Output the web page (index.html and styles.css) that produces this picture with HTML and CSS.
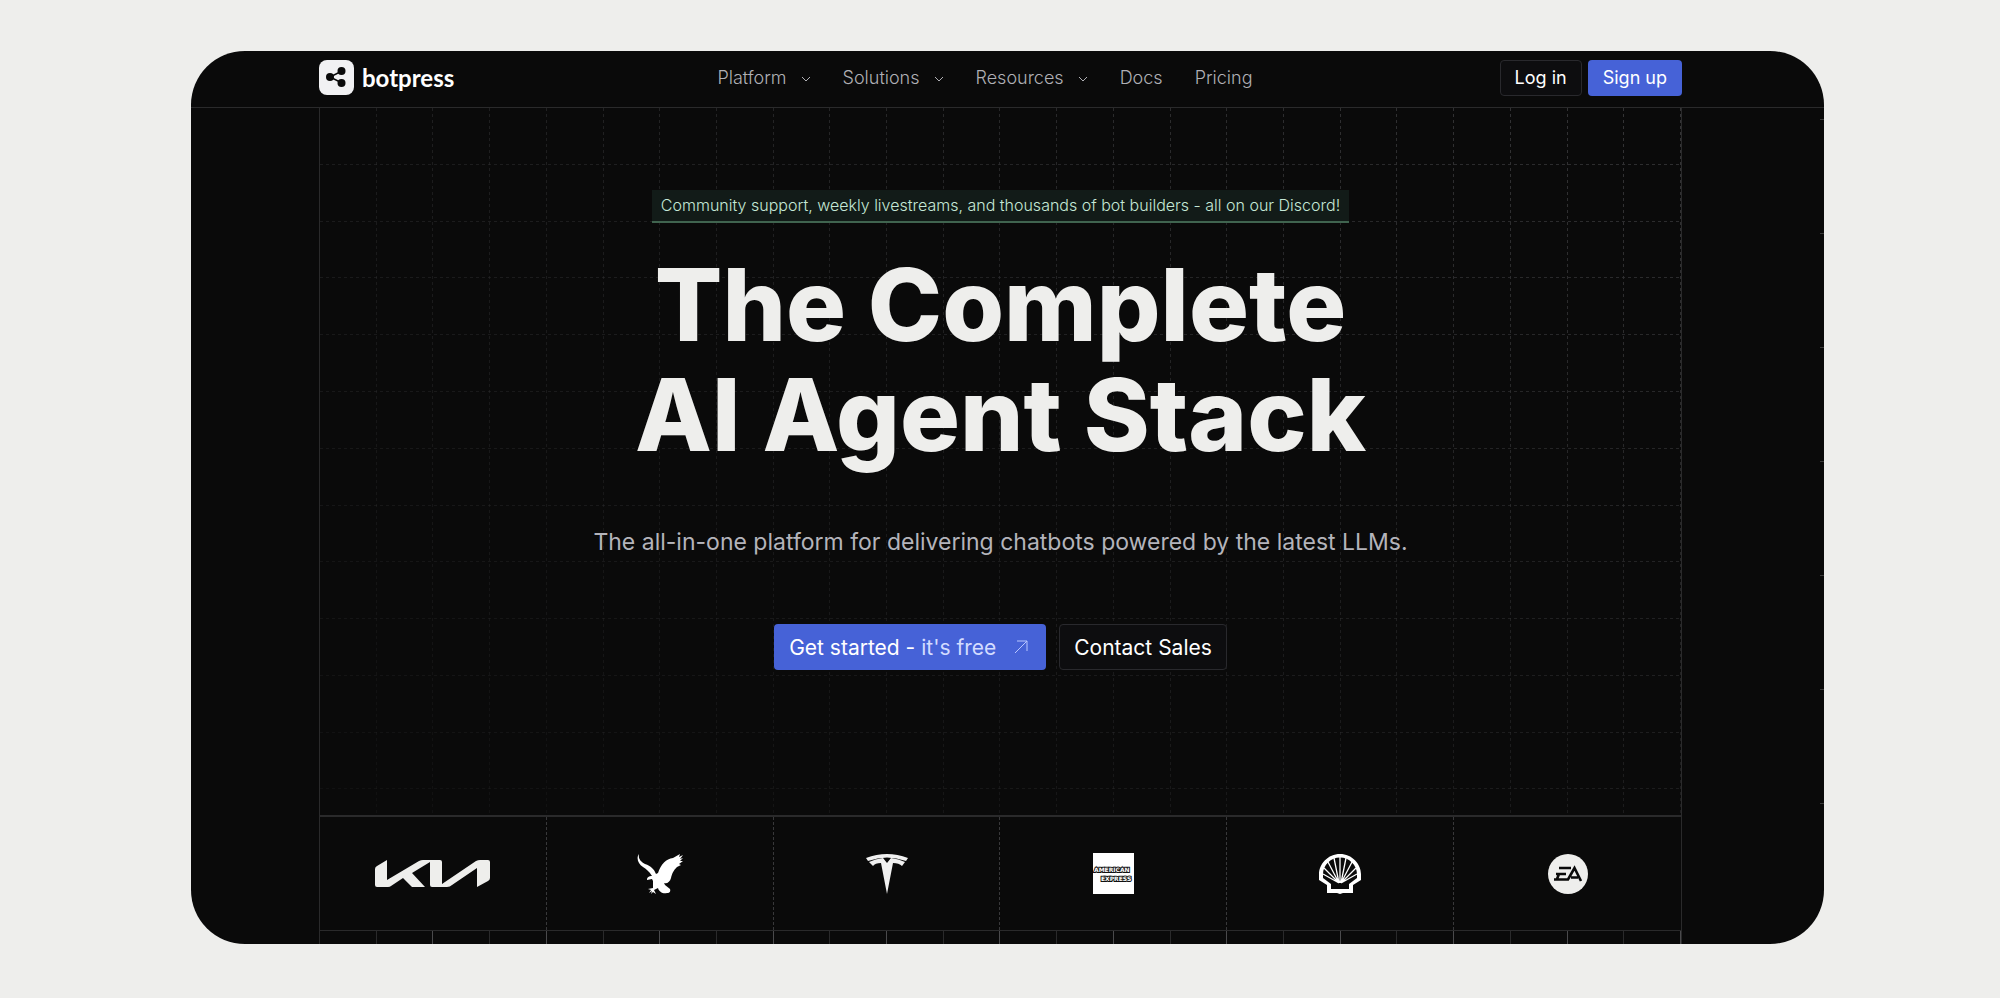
FILE: index.html
```
<!DOCTYPE html>
<html lang="en">

<head>
    <meta charset="utf-8">
    <meta name="viewport" content="width=device-width, initial-scale=1.0">
    <title>Botpress</title>
    <link rel="stylesheet" href="styles.css">
</head>

<body>
    <div class="frame">
        <header class="header">
            <div class="wrap header-inner">
                <a class="brand" href="#">
                    <svg class="brand-icon" viewBox="0 0 35 35" aria-hidden="true">
                        <rect width="35" height="35" rx="8" fill="#f1f1f3" />
                        <path d="M23 11 11 17l12 6" fill="none" stroke="#0a0a0a" stroke-width="1.5" />
                        <circle cx="22.5" cy="11" r="4" fill="#0a0a0a" />
                        <circle cx="11" cy="17" r="4" fill="#0a0a0a" />
                        <circle cx="22.5" cy="23" r="4" fill="#0a0a0a" />
                    </svg>
                    <span>botpress</span>
                </a>
                <nav class="nav">
                    <a href="#">Platform <svg class="chev" viewBox="0 0 10 6"><path d="M1 1l4 4 4-4" /></svg></a>
                    <a href="#">Solutions <svg class="chev" viewBox="0 0 10 6"><path d="M1 1l4 4 4-4" /></svg></a>
                    <a href="#">Resources <svg class="chev" viewBox="0 0 10 6"><path d="M1 1l4 4 4-4" /></svg></a>
                    <a href="#">Docs</a>
                    <a href="#">Pricing</a>
                </nav>
                <div class="account">
                    <button class="btn btn-dark" type="button">Log in</button>
                    <button class="btn btn-blue" type="button">Sign up</button>
                </div>
            </div>
        </header>

        <main class="wrap content">
            <section class="hero">
                <a class="notice" href="#">Community support, weekly livestreams, and thousands of bot builders - all on our Discord!</a>
                <h1>The Complete<br>AI Agent Stack</h1>
                <p>The all-in-one platform for delivering chatbots powered by the latest LLMs.</p>
                <div class="actions">
                    <button class="btn btn-large btn-blue" type="button">
                        <span>Get started - <span class="soft">it's free</span></span>
                        <svg class="arrow" viewBox="0 0 14 14"><path d="M1 13 13 1M3 1h10v10" /></svg>
                    </button>
                    <button class="btn btn-large btn-dark" type="button">Contact Sales</button>
                </div>
            </section>

            <section class="logos">
                <div class="logo">
                    <svg width="115" height="27" viewBox="0 0 115 27" fill="#eeeeec" role="img" aria-label="Kia">
                        <path d="M0 9Q0 7 2 6L12 0V20L44 1Q46 0 48 0H65Q67 0 67 2V24L101 1Q103 0 105 0H113Q115 0 115 2V18Q115 20 113 21L102 27V8L77 25Q75 27 72 27H57Q55 27 55 25V2L37 13 50 27H37L28 18 16 26Q15 27 13 27H2Q0 27 0 25Z" />
                    </svg>
                </div>
                <div class="logo">
                    <svg width="46" height="40" viewBox="0 0 46 40" fill="#fff" role="img" aria-label="American Eagle">
                        <path d="M2 0C1 5 4 8 8 10C14 12 17 15 19 20L21 19C24 10 29 5 36 4L43 0 42 3 46 1 43 5 46 4 43 7 46 7 42 10 44 11 40 13C36 17 35 20 34 24C33 28 30 30 27 29L28 31 33 35C34 38 32 39 30 39C26 40 22 38 21 34L17 36 19 40 16 38 14 40 15 37 12 39 14 36 11 35 16 34 16 27 15 25 10 26C10 23 12 22 15 22C12 17 9 15 6 13C1 10-1 4 2 0Z" />
                    </svg>
                </div>
                <div class="logo">
                    <svg width="42" height="40" viewBox="0 0 42 40" fill="#f1f1f1" role="img" aria-label="Tesla">
                        <path d="M0 4Q21-4 42 4L40 7Q21 0 2 7Z" />
                        <path d="M3 8Q9 5 17 4L21 9 25 4Q33 5 39 8L36 12Q33 9 27 9L21 40 15 9Q9 9 7 12Z" />
                    </svg>
                </div>
                <div class="logo">
                    <svg class="amex" width="41" height="41" viewBox="0 0 41 41" role="img" aria-label="American Express">
                        <rect width="41" height="41" fill="#fff" />
                        <text x="1" y="19">AMERICAN</text>
                        <text x="8" y="28">EXPRESS</text>
                    </svg>
                </div>
                <div class="logo">
                    <svg width="42" height="40" viewBox="0 0 42 40" role="img" aria-label="Shell">
                        <path d="M21 0C9 0 0 10 0 20V26L8 31V39H18L21 40 24 39H34V31L42 26V20C42 10 33 0 21 0Z" fill="#fff" />
                        <path d="M21 3.5C12 3.5 4 11 4 20V24L12 30V35H30V30L38 24V20C38 11 30 3.5 21 3.5Z" fill="#0a0a0a" />
                        <path d="M20 29 4 20M20 29 5 14M20 29 9 8M20 29 15 4M21 29V3M22 29 27 4M22 29 33 8M22 29 37 14M22 29 38 20" stroke="#fff" stroke-width="1.3" />
                    </svg>
                </div>
                <div class="logo">
                    <svg width="40" height="40" viewBox="0 0 40 40" role="img" aria-label="EA">
                        <circle cx="20" cy="20" r="20" fill="#eeeeec" />
                        <path d="M11 14H23M8 20H18M6 25.5H20L26.5 14 33 27M23 23.5H30M11 20 9 25" fill="none" stroke="#0a0a0a" stroke-width="2.6" />
                    </svg>
                </div>
            </section>
            <div class="ruler"></div>
        </main>
    </div>
</body>

</html>
```
FILE: styles.css
```
* {
    box-sizing: border-box;
}

html,
body {
    height: 100%;
}

body {
    margin: 0;
    padding: 51px 176px 54px 191px;
    background: #eeeeec;
    color: #fff;
    font-family: Inter, "Open Sans", sans-serif;
}

a {
    color: inherit;
    text-decoration: none;
}

.frame {
    position: relative;
    display: flex;
    flex-direction: column;
    min-height: 100%;
    padding-right: 14px;
    overflow: hidden;
    background: #0a0a0a;
    border-radius: 54px;
}

/* marks down the scrollbar edge */
.frame::after {
    content: "";
    position: absolute;
    top: 68px;
    right: 0;
    bottom: 100px;
    width: 4px;
    background: repeating-linear-gradient(#3a3a3a 0 1px, transparent 1px 114px);
}

.wrap {
    width: 100%;
    max-width: 1363px;
    margin: 0 auto;
}

.header {
    flex: none;
    margin-right: -14px;
    padding-right: 14px;
    border-bottom: 1px solid #2a2a2b;
}

.header-inner {
    display: flex;
    align-items: center;
    justify-content: space-between;
    height: 56px;
    padding-bottom: 3px;
}

.brand {
    display: flex;
    align-items: center;
    gap: 8px;
    font-family: Lato, sans-serif;
    font-size: 24px;
    font-weight: 700;
}

.brand-icon {
    width: 35px;
    height: 35px;
}

.nav {
    display: flex;
    gap: 32px;
    margin-left: 16px;
    color: #b0b0b5;
    font-size: 18px;
    font-weight: 300;
}

.nav a {
    display: flex;
    align-items: center;
    gap: 14px;
}

.chev {
    width: 10px;
    height: 6px;
    margin-top: 3px;
    fill: none;
    stroke: #b0b0b5;
}

.account {
    display: flex;
    justify-content: flex-end;
    gap: 6px;
}

.btn {
    display: flex;
    align-items: center;
    justify-content: center;
    height: 36px;
    padding: 0 14px;
    border: 1px solid transparent;
    border-radius: 4px;
    color: #fff;
    font-family: inherit;
    font-size: 18px;
    font-weight: 400;
    white-space: nowrap;
}

.btn-dark {
    background: #0d0d0f;
    border-color: #29292d;
}

.btn-blue {
    background: #4662d7;
}

.btn-large {
    height: 46px;
    font-size: 21px;
}

.content {
    flex: 1;
    display: flex;
    flex-direction: column;
    border: solid #2a2a2b;
    border-width: 0 1px;
}

.hero {
    position: relative;
    flex: 1;
    display: flex;
    flex-direction: column;
    align-items: center;
    padding: 82px 0 64px;
    text-align: center;
}

/* dashed grid that brightens toward the upper right */
.hero::before,
.hero::after {
    content: "";
    position: absolute;
    inset: 0;
    mask-composite: intersect;
}

.hero::before {
    background: repeating-linear-gradient(to right, transparent 0 calc(100% / 24 - 1px), #353537 calc(100% / 24 - 1px) calc(100% / 24));
    mask-image: repeating-linear-gradient(#000 0 3px, transparent 3px 6px), linear-gradient(to top right, rgba(0, 0, 0, .15), rgba(0, 0, 0, .45) 50%, #000);
}

.hero::after {
    background: repeating-linear-gradient(transparent 0 calc(100% / 12.45 - 1px), #303032 calc(100% / 12.45 - 1px) calc(100% / 12.45));
    mask-image: repeating-linear-gradient(to right, #000 0 3px, transparent 3px 6px), linear-gradient(to top right, rgba(0, 0, 0, .2), rgba(0, 0, 0, .5) 50%, #000);
}

.hero > * {
    position: relative;
    z-index: 1;
}

.notice {
    padding: 0 9px;
    border-bottom: 2px solid #40644f;
    background: #121b18;
    color: #c5e8d6;
    font-size: 16px;
    font-weight: 300;
    line-height: 31px;
}

h1 {
    margin: 27px 0 0;
    color: #eeeeec;
    font-size: 100px;
    font-weight: 800;
    line-height: 110px;
}

.hero p {
    margin: 56px 0 0;
    color: #b4b4bb;
    font-size: 23px;
    line-height: 32px;
}

.actions {
    display: flex;
    gap: 13px;
    margin-top: 66px;
}

.soft {
    color: #d3dcff;
}

.arrow {
    width: 14px;
    height: 14px;
    margin: 0 3px 0 18px;
    fill: none;
    stroke: #b9c6ff;
}

.logos {
    flex: none;
    display: grid;
    grid-template-columns: repeat(6, 1fr);
    height: 116px;
    border: solid #2a2a2b;
    border-width: 2px 0 1px;
}

.logo {
    display: flex;
    align-items: center;
    justify-content: center;
}

.logo:not(:last-child) {
    border-right: 1px dashed #38383a;
}

.amex text {
    fill: #fff;
    stroke: #111;
    stroke-width: 2px;
    paint-order: stroke;
    font-family: "DejaVu Sans", sans-serif;
    font-size: 6px;
    font-weight: 700;
}

/* short lines under the logo row, every second one brighter */
.ruler {
    flex: none;
    height: 13px;
    background:
        repeating-linear-gradient(to right, transparent 0 calc(100% / 12 - 1px), #4a4a4c calc(100% / 12 - 1px) calc(100% / 12)),
        repeating-linear-gradient(to right, transparent 0 calc(100% / 24 - 1px), #2a2a2b calc(100% / 24 - 1px) calc(100% / 24));
}
```
